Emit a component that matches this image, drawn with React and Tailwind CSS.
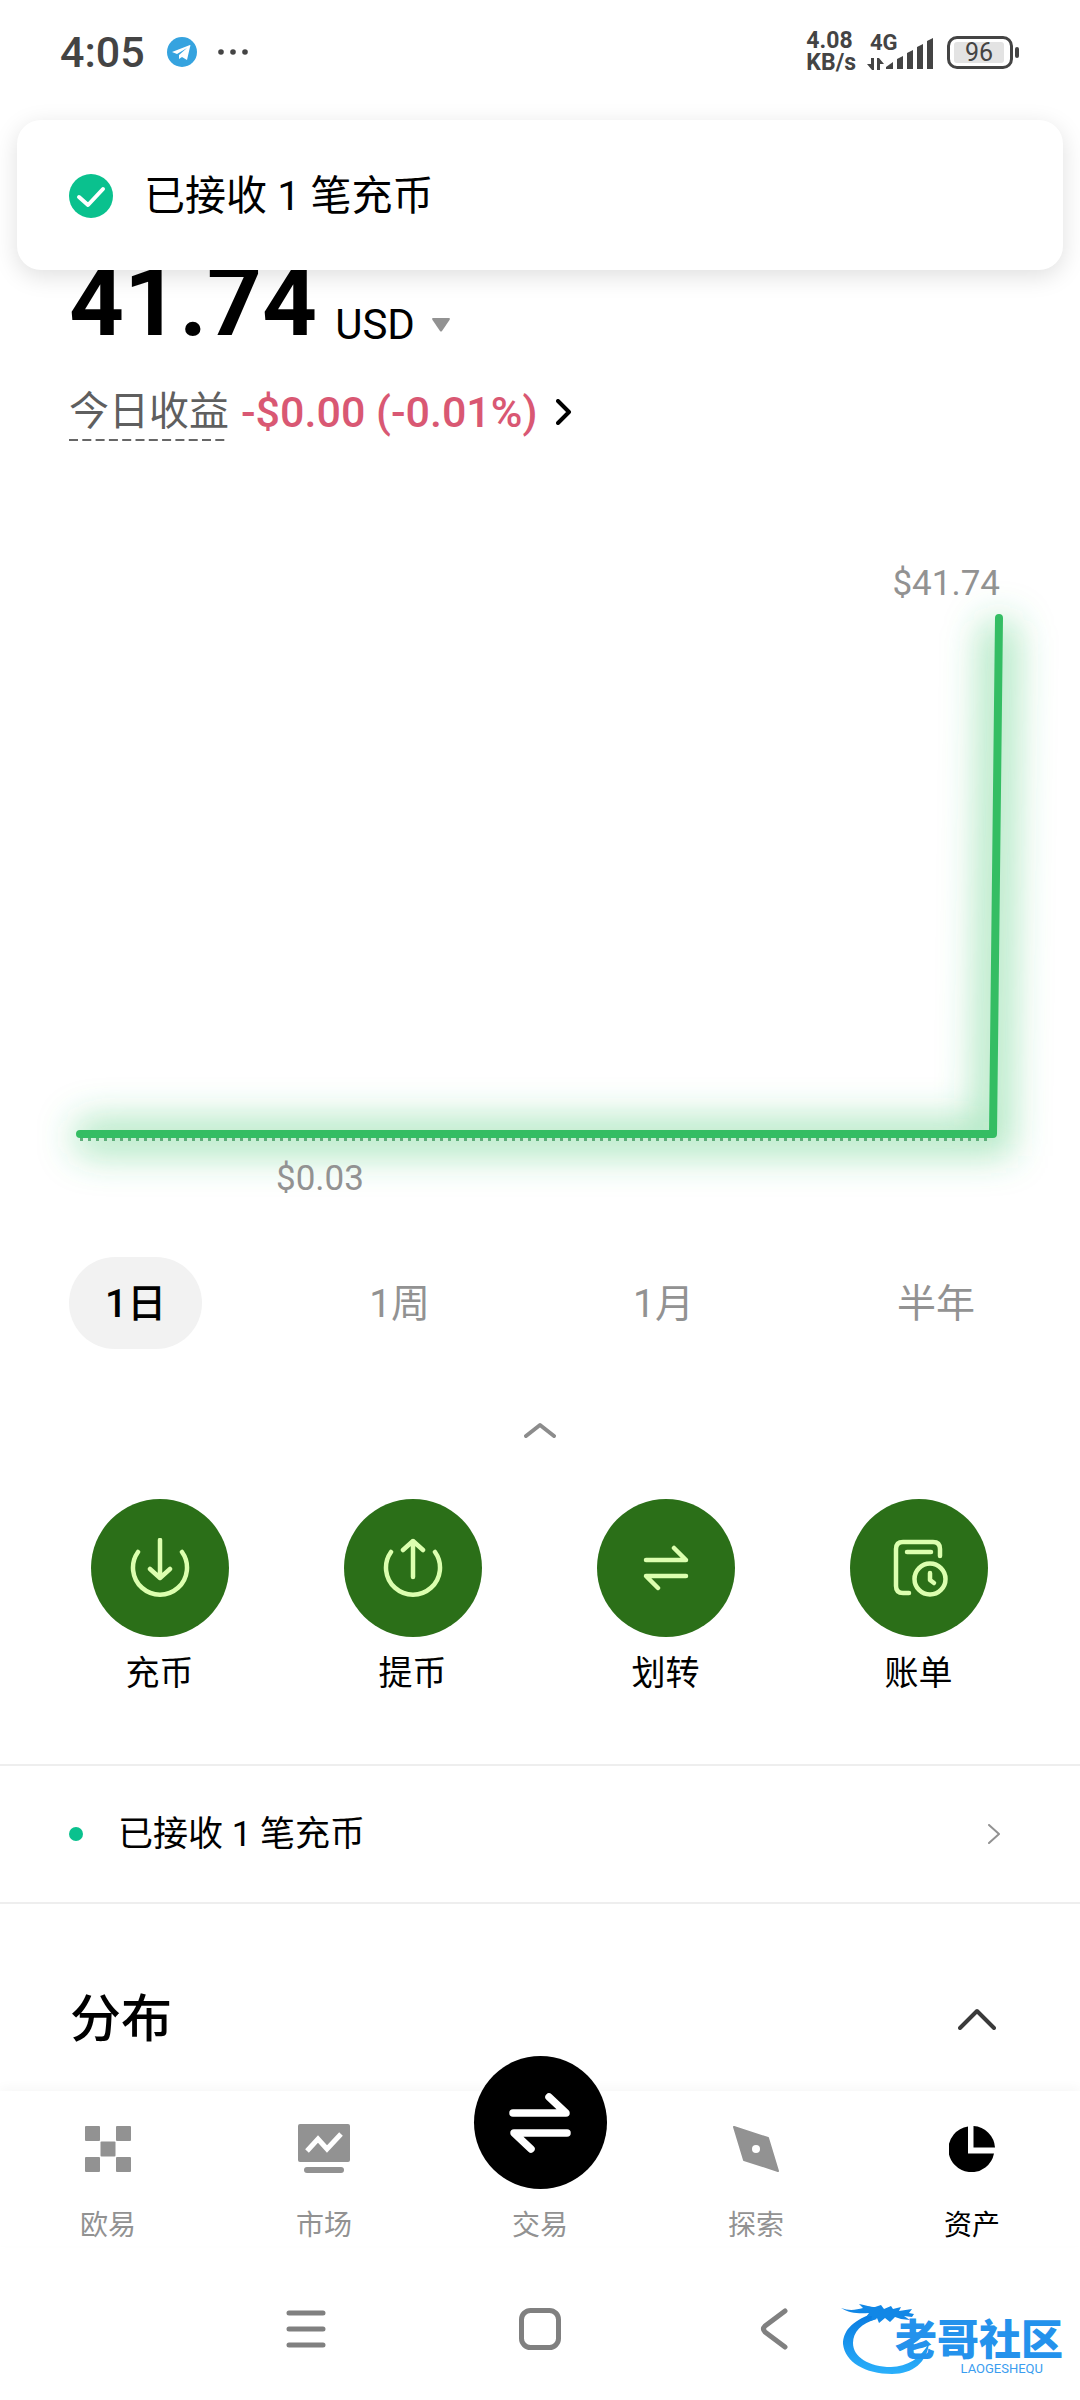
import React, { useState } from 'react';

const RANGES = ['1日', '1周', '1月', '半年'];

function DepositIcon() {
  return (
    <svg viewBox="0 0 60 60" fill="none" stroke="currentColor" strokeWidth="4.500" strokeLinecap="round" strokeLinejoin="round" className="size-[60px]">
      <path d="M30 2V39M20 31L30 40L40 31" />
      <path d="M8 14A27 27 0 1 0 52 14" />
    </svg>
  );
}

function WithdrawIcon() {
  return (
    <svg viewBox="0 0 60 60" fill="none" stroke="currentColor" strokeWidth="4.500" strokeLinecap="round" strokeLinejoin="round" className="size-[60px]">
      <path d="M30 39V3M20 12L30 3L40 12" />
      <path d="M8 14A27 27 0 1 0 52 14" />
    </svg>
  );
}

function TransferIcon() {
  return (
    <svg viewBox="0 0 46 46" fill="none" stroke="currentColor" strokeWidth="4.500" strokeLinecap="round" strokeLinejoin="round" className="size-[46px]">
      <path d="M3 15H43L31 3" />
      <path d="M43 31H3L15 43" />
    </svg>
  );
}

function BillIcon() {
  return (
    <svg viewBox="0 0 60 60" fill="none" stroke="currentColor" strokeWidth="4.500" strokeLinecap="round" strokeLinejoin="round" className="size-[60px]">
      <path d="M20 55H14Q7 55 7 48V11Q7 4 14 4H44Q51 4 51 11V18" />
      <path d="M18 14H42" />
      <circle cx="41" cy="41" r="15.500" />
      <path d="M41 35V42L45 45" />
    </svg>
  );
}

const ACTIONS = [
  { label: '充币', icon: <DepositIcon /> },
  { label: '提币', icon: <WithdrawIcon /> },
  { label: '划转', icon: <TransferIcon /> },
  { label: '账单', icon: <BillIcon /> },
];

const NAV_ITEMS = [
  {
    label: '欧易',
    icon: (
      <svg viewBox="0 0 46 46" fill="currentColor" className="size-[46px]">
        <rect x="0" y="0" width="15" height="15" rx="1" />
        <rect x="31" y="0" width="15" height="15" rx="1" />
        <rect x="15.500" y="15.500" width="15" height="15" rx="1" />
        <rect x="0" y="31" width="15" height="15" rx="1" />
        <rect x="31" y="31" width="15" height="15" rx="1" />
      </svg>
    ),
  },
  {
    label: '市场',
    icon: (
      <svg viewBox="0 0 52 50" className="h-[50px] w-[52px]">
        <rect width="52" height="38" rx="2" fill="currentColor" />
        <path d="M9 27L20 15L29 25L43 10" fill="none" stroke="#fff" strokeWidth="5" />
        <path d="M9 46H43" stroke="currentColor" strokeWidth="6" strokeLinecap="round" />
      </svg>
    ),
  },
  {
    label: '交易',
    icon: (
      <span className="-mt-[70px] flex size-[133px] items-center justify-center self-start rounded-full bg-black text-white">
        <svg viewBox="0 0 64 64" fill="none" stroke="currentColor" strokeWidth="7.500" strokeLinecap="round" strokeLinejoin="round" className="size-[64px]">
          <path d="M5 22H58L41 6" />
          <path d="M59 42H6L23 58" />
        </svg>
      </span>
    ),
  },
  {
    label: '探索',
    icon: (
      <svg viewBox="0 0 46 46" className="size-[46px]">
        <path d="M1 1L35 12L45 45L11 34Z" fill="currentColor" stroke="currentColor" strokeWidth="2" strokeLinejoin="round" />
        <circle cx="23" cy="23" r="4" fill="#fff" />
      </svg>
    ),
  },
  {
    label: '资产',
    icon: (
      <svg viewBox="0 0 46 46" fill="currentColor" className="size-[46px]">
        <path d="M19 0.400A23 23 0 1 0 45 27.500H19Z" />
        <path d="M24.500 0A23 23 0 0 1 46 21.500H24.500Z" />
      </svg>
    ),
  },
];

function StatusBar() {
  return (
    <header className="flex h-[104px] items-center justify-between pl-[60px] pr-[61px] text-[#444]">
      <div className="flex items-center">
        <span className="text-[43px] font-medium leading-none">4:05</span>
        <svg viewBox="0 0 30 30" className="ml-[22px] size-[30px]">
          <circle cx="15" cy="15" r="15" fill="#35a3df" />
          <path d="M5 15L23 8Q24 8 23 10L20 23L15 20L12 22V18L20 11L10 17Z" fill="#fff" />
        </svg>
        <svg viewBox="0 0 30 6" fill="currentColor" className="ml-[21px] h-[6px] w-[30px]">
          <circle cx="3" cy="3" r="2.800" />
          <circle cx="15" cy="3" r="2.800" />
          <circle cx="27" cy="3" r="2.800" />
        </svg>
      </div>

      <div className="flex items-center">
        <div className="flex flex-col text-[23px] font-bold leading-[22px]">
          <span>4.08</span>
          <span>KB/s</span>
        </div>
        {/* Mobile signal */}
        <div className="relative ml-[11px] h-[36px] w-[66px]">
          <span className="absolute left-[3px] top-0 text-[22px] font-bold leading-[18px]">4G</span>
          <svg viewBox="0 0 66 36" fill="currentColor" className="size-full">
            <path d="M4 24H7V36H5L0 30H4ZM10 24H12L17 30H13V36H10Z" />
            <path d="M26 28V35H19V33Z" />
            <path d="M30 25L36 22V35H30Z" />
            <path d="M40 19L46 16V35H40Z" />
            <path d="M50 13L56 10V35H50Z" />
            <path d="M60 7L66 4V35H60Z" />
          </svg>
        </div>
        {/* Battery */}
        <div className="ml-[14px] flex h-[33px] w-[66px] items-center rounded-[10px] border-3 border-[#444] p-[4px]">
          <span className="flex h-[21px] w-[50px] items-center justify-center rounded-[3px] bg-[#e3e3e3] text-[25px] leading-none">96</span>
        </div>
        <span className="ml-[2px] h-[11px] w-[4px] rounded-[2px] bg-[#444]" />
      </div>
    </header>
  );
}

function Toast() {
  return (
    <div role="status" className="absolute inset-x-[17px] top-[120px] flex h-[150px] items-center gap-[31px] rounded-[24px] bg-white pl-[52px] pt-[2px] shadow-[0_6px_24px_rgba(0,0,0,0.13)]">
      <svg viewBox="0 0 44 44" fill="none" className="size-[44px]">
        <circle cx="22" cy="22" r="22" fill="#0ac18e" />
        <path d="M10 23L19 31L34 15" stroke="#fff" strokeWidth="4" strokeLinecap="round" strokeLinejoin="round" />
      </svg>
      <span className="text-[41px] leading-[56px]">已接收 1 笔充币</span>
    </div>
  );
}

function Balance() {
  return (
    <section className="mt-[150px] px-[69px]">
      <div className="flex items-end">
        <span className="text-[96px] font-bold leading-none">41.74</span>
        <button className="ml-[18px] flex items-center gap-[17px] text-[42px] leading-[50px]">
          USD
          <svg viewBox="0 0 18 14" fill="#929292" className="h-[14px] w-[18px]">
            <path d="M1 0H17Q18.500 0 17.500 2L10 13Q9 14 8 13L0.500 2Q-0.500 0 1 0Z" />
          </svg>
        </button>
      </div>
      <div className="mt-[35px] flex items-start leading-[54px]">
        <div>
          <span className="block text-[40px] text-[#5f5f5f]">今日收益</span>
          <svg viewBox="0 0 156 2" className="block h-[2px] w-[156px]">
            <path d="M0 1H156" stroke="#666" strokeWidth="2" strokeDasharray="9 4.300" />
          </svg>
        </div>
        <a href="#pnl" className="ml-[12px] flex items-center gap-[19px] text-[43px] font-medium text-[#d95873]">
          -$0.00 (-0.01%)
          <svg viewBox="0 0 16 26" fill="none" stroke="#000" strokeWidth="4" strokeLinecap="round" strokeLinejoin="round" className="h-[26px] w-[16px]">
            <path d="M2 2L13 13L2 24" />
          </svg>
        </a>
      </div>
    </section>
  );
}

function BalanceChart() {
  return (
    <section className="mt-[122px] text-[35px] leading-[42px] text-[#929292]">
      <p className="pr-[80px] text-right">$41.74</p>
      <svg viewBox="0 2 1080 545" fill="none" className="block w-full overflow-visible">
        <defs>
          <filter id="glow" filterUnits="userSpaceOnUse" x="0" y="-80" width="1080" height="700">
            <feGaussianBlur stdDeviation="18" />
          </filter>
        </defs>
        <path d="M92 534H993L999 34" stroke="#35c368" strokeOpacity="0.400" strokeWidth="38" strokeLinecap="round" filter="url(#glow)" />
        <path d="M80 536H992" stroke="#5fae7a" strokeWidth="4" strokeDasharray="3 5" />
        <path d="M80 531H993L999 15" stroke="#34bd63" strokeWidth="8" strokeLinecap="round" strokeLinejoin="round" />
      </svg>
      <p className="mt-[8px] pl-[276px]">$0.03</p>
    </section>
  );
}

function RangeTabs() {
  const [range, setRange] = useState('1日');
  return (
    <div className="mt-[57px] flex justify-between px-[69px]">
      {RANGES.map((item) => (
        <button
          key={item}
          onClick={() => setRange(item)}
          className={`h-[92px] rounded-full px-[36px] pt-[3px] text-[39px] ${
            item === range ? 'bg-[#f2f2f2] font-medium text-black' : 'text-[#929292]'
          }`}
        >
          {item}
        </button>
      ))}
    </div>
  );
}

function BottomNav() {
  return (
    <nav className="mt-[32px] grid grid-cols-5 pt-[35px] shadow-[0_-4px_10px_rgba(0,0,0,0.03)]">
      {NAV_ITEMS.map(({ label, icon }) => (
        <a
          key={label}
          href={`#${label}`}
          className={`flex flex-col items-center ${label === '资产' ? 'text-black' : 'text-[#929292]'}`}
        >
          <span className="flex h-[46px] items-center justify-center">{icon}</span>
          <span className="mt-[34px] text-[28px] leading-[40px]">{label}</span>
        </a>
      ))}
    </nav>
  );
}

function Watermark() {
  return (
    <div className="absolute bottom-[22px] right-[17px] h-[78px] w-[222px]">
      <svg viewBox="0 0 222 78" fill="none" className="absolute inset-0 size-full">
        <defs>
          <linearGradient id="dragon" x1="0" y1="0" x2="0" y2="1">
            <stop offset="0" stopColor="#0a7be0" />
            <stop offset="1" stopColor="#2ab0fb" />
          </linearGradient>
        </defs>
        <path d="M31 14C10 21 2 32 2 44C4 62 24 74 51 74C72 74 86 62 88 43C80 58 66 67 50 67C28 67 12 57 12 43C12 32 20 23 36 19Z" fill="url(#dragon)" />
        <path d="M0 8C8 11 15 10 22 8L18 4C25 5 29 7 34 7L40 5L43 9L50 6L52 9L60 7L58 11L71 9L68 13L73 14L71 17L63 16L69 20L60 19L54 17L49 22L44 18L38 23L36 18L30 21L31 16L25 17L28 13C18 14 8 13 0 8Z" fill="#1187e6" />
      </svg>
      <span className="absolute right-0 top-[21px] whitespace-nowrap text-[42px] font-black leading-[40px] text-[#2492ec]">老哥社区</span>
      <span className="absolute right-[20px] top-[63px] text-[13px] leading-[12px] text-[#3a9df0]">LAOGESHEQU</span>
    </div>
  );
}

export default function App() {
  return (
    <div className="relative bg-white font-[Roboto,'Noto_Sans_CJK_SC',sans-serif] text-black">
      <StatusBar />
      <Balance />
      <BalanceChart />
      <RangeTabs />

      <button aria-label="收起" className="mx-auto mt-[61px] flex h-[40px] w-[60px] items-center justify-center">
        <svg viewBox="0 0 32 16" fill="none" stroke="#8c8c8c" strokeWidth="4" strokeLinecap="round" strokeLinejoin="round" className="h-[16px] w-[32px]">
          <path d="M2 14L16 3L30 14" />
        </svg>
      </button>

      {/* Quick actions */}
      <div className="mt-[49px] grid grid-cols-4 pl-[33px] pr-[35px]">
        {ACTIONS.map(({ label, icon }) => (
          <button key={label} className="flex flex-col items-center">
            <span className="flex size-[138px] items-center justify-center rounded-full bg-[#2b6f18] text-[#dcffaf]">{icon}</span>
            <span className="mt-[14px] text-[34px] leading-[44px]">{label}</span>
          </button>
        ))}
      </div>

      <a href="#deposits" className="mt-[69px] flex h-[140px] items-center border-y-2 border-[#eee] pl-[69px] pr-[80px]">
        <span className="size-[14px] rounded-full bg-[#0ac18e]" />
        <span className="ml-[35px] flex-1 pt-[2px] text-[35px] leading-[44px]">已接收 1 笔充币</span>
        <svg viewBox="0 0 12 20" fill="none" stroke="#929292" strokeWidth="2" strokeLinecap="round" strokeLinejoin="round" className="h-[20px] w-[12px]">
          <path d="M1 1L11 10L1 19" />
        </svg>
      </a>

      <div className="mt-[75px] flex h-[80px] items-center justify-between pl-[70px] pr-[84px]">
        <h2 className="pt-[2px] text-[51px] font-medium leading-[80px]">分布</h2>
        <button aria-label="收起分布">
          <svg viewBox="0 0 38 22" fill="none" stroke="#3a3a3a" strokeWidth="4" strokeLinecap="round" strokeLinejoin="round" className="h-[22px] w-[38px]">
            <path d="M2 20L19 3L36 20" />
          </svg>
        </button>
      </div>

      <BottomNav />

      {/* System keys */}
      <div className="mt-[30px] grid h-[124px] grid-cols-3 px-[17.5%] pb-[18px] text-[#808080]">
        <button aria-label="菜单" className="flex items-center justify-center">
          <svg viewBox="0 0 42 42" fill="none" stroke="currentColor" strokeWidth="5" strokeLinecap="round" className="size-[42px]">
            <path d="M4 5H38M4 21H38M4 37H38" />
          </svg>
        </button>
        <button aria-label="主页" className="flex items-center justify-center">
          <svg viewBox="0 0 42 42" fill="none" stroke="currentColor" strokeWidth="5" className="size-[42px]">
            <rect x="2.500" y="2.500" width="37" height="37" rx="9" />
          </svg>
        </button>
        <button aria-label="返回" className="flex items-center justify-center">
          <svg viewBox="0 0 28 42" fill="none" stroke="currentColor" strokeWidth="5" strokeLinecap="round" strokeLinejoin="round" className="h-[42px] w-[28px]">
            <path d="M25 3L5 18Q2 21 5 24L25 39" />
          </svg>
        </button>
      </div>

      <Toast />
      <Watermark />
    </div>
  );
}
